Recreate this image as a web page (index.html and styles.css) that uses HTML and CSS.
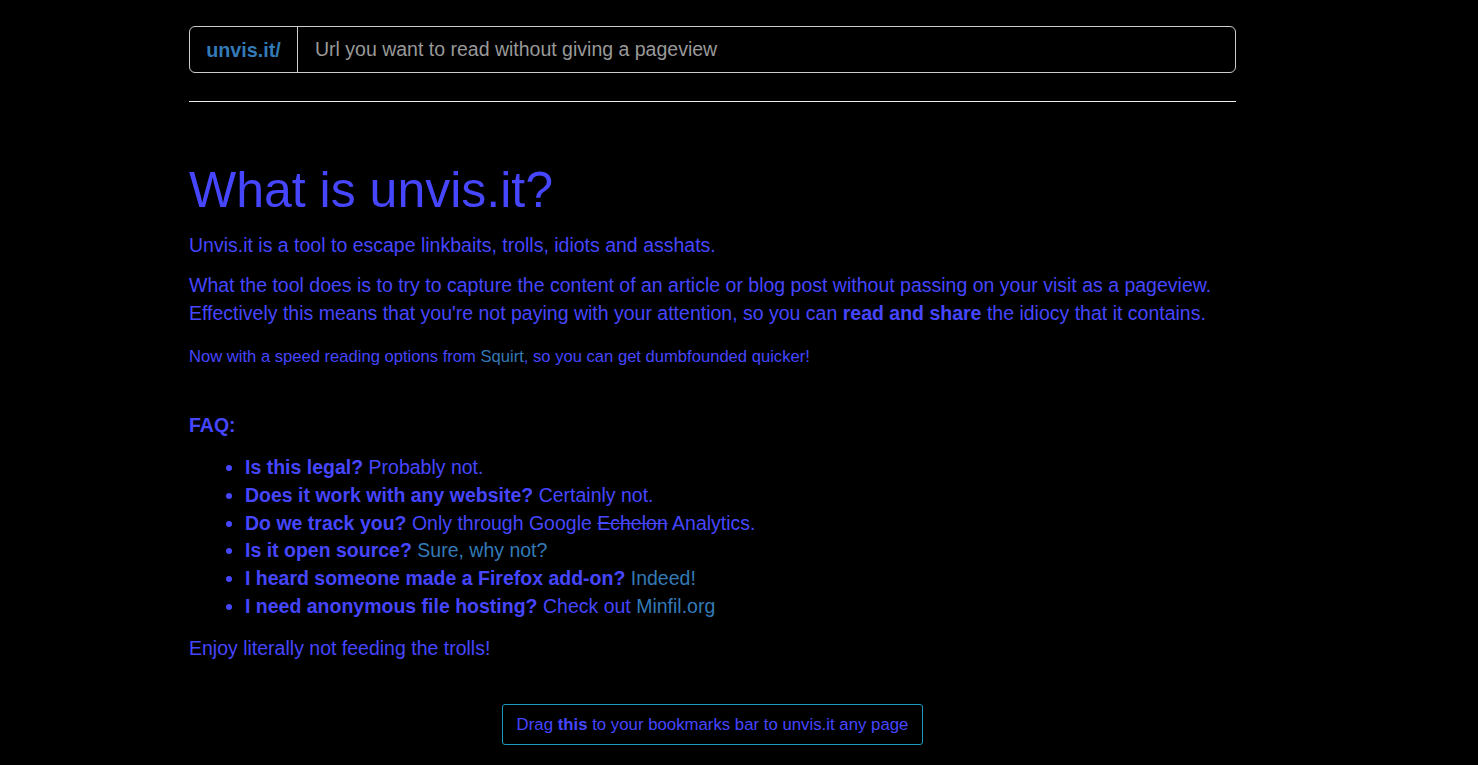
FILE: index.html
```html
<!DOCTYPE html>
<html lang="en">
<head>
  <meta charset="UTF-8">
  <meta name="viewport" content="width=device-width, initial-scale=1.0">
  <title>unvis.it</title>
  <link rel="stylesheet" href="styles.css">
</head>
<body>

  <div class="container">
    <form class="url-form">
      <span class="url-prefix">unvis.it/</span>
      <input type="text" class="url-input" placeholder="Url you want to read without giving a pageview">
    </form>

    <hr>

    <h1>What is unvis.it?</h1>
    <p>Unvis.it is a tool to escape linkbaits, trolls, idiots and asshats.</p>
    <p>What the tool does is to try to capture the content of an article or blog post without passing on your visit as a pageview. Effectively this means that you're not paying with your attention, so you can <strong>read and share</strong> the idiocy that it contains.</p>
    <p class="small">Now with a speed reading options from <a href="#">Squirt</a>, so you can get dumbfounded quicker!</p>

    <p class="faq-title"><strong>FAQ:</strong></p>
    <ul class="faq">
      <li><strong>Is this legal?</strong> Probably not.</li>
      <li><strong>Does it work with any website?</strong> Certainly not.</li>
      <li><strong>Do we track you?</strong> Only through Google <del>Echelon</del> Analytics.</li>
      <li><strong>Is it open source?</strong> <a href="#">Sure, why not?</a></li>
      <li><strong>I heard someone made a Firefox add-on?</strong> <a href="#">Indeed!</a></li>
      <li><strong>I need anonymous file hosting?</strong> Check out <a href="#">Minfil.org</a></li>
    </ul>
    <p>Enjoy literally not feeding the trolls!</p>

    <div class="bookmarklet-row">
      <a class="bookmarklet" href="#">Drag <strong>this</strong> to your bookmarks bar to unvis.it any page</a>
    </div>
  </div>

</body>
</html>
```

FILE: styles.css
```css
body {
  margin: 0;
  padding: 0;
  background: #000;
  color: #4646ff;
  font-family: 'Liberation Sans', Arial, sans-serif;
  font-size: 19.5px;
  line-height: 28px;
}

.container {
  width: 1047px;
  margin-left: 189px;
  padding-top: 26px;
}

a {
  color: #337ab7;
  text-decoration: none;
}

/* URL bar */
.url-form {
  display: flex;
  height: 47px;
  border: 1px solid #ccc;
  border-radius: 6px;
  box-sizing: border-box;
  margin: 0;
}

.url-prefix {
  display: flex;
  align-items: center;
  justify-content: center;
  width: 107px;
  border-right: 1px solid #ccc;
  color: #337ab7;
  font-weight: bold;
  font-size: 19.8px;
}

.url-input {
  flex: 1;
  background: transparent;
  border: none;
  outline: none;
  padding: 0 17px;
  font-family: inherit;
  font-size: 19.5px;
  color: #999;
}

.url-input::placeholder {
  color: #999;
}

hr {
  border: none;
  border-top: 1px solid #eee;
  margin: 28px 0 0;
}

h1 {
  font-size: 50px;
  font-weight: normal;
  line-height: 56px;
  margin: 60px 0 13px;
}

p {
  margin: 0 0 12px;
}

.small {
  font-size: 16.6px;
  line-height: 22px;
  margin-top: 19px;
}

.faq-title {
  margin: 43px 0 15px;
}

.faq {
  margin: 0 0 13px;
  padding-left: 56px;
}

.faq li {
  line-height: 27.8px;
}

del {
  text-decoration: line-through;
}

/* Bookmarklet */
.bookmarklet-row {
  display: flex;
  justify-content: center;
  margin-top: 42px;
}

.bookmarklet {
  display: inline-block;
  padding: 9px 14px;
  border: 1px solid #1a9ac0;
  border-radius: 3px;
  color: #4646ff;
  font-size: 16.8px;
  line-height: 21px;
}
```
